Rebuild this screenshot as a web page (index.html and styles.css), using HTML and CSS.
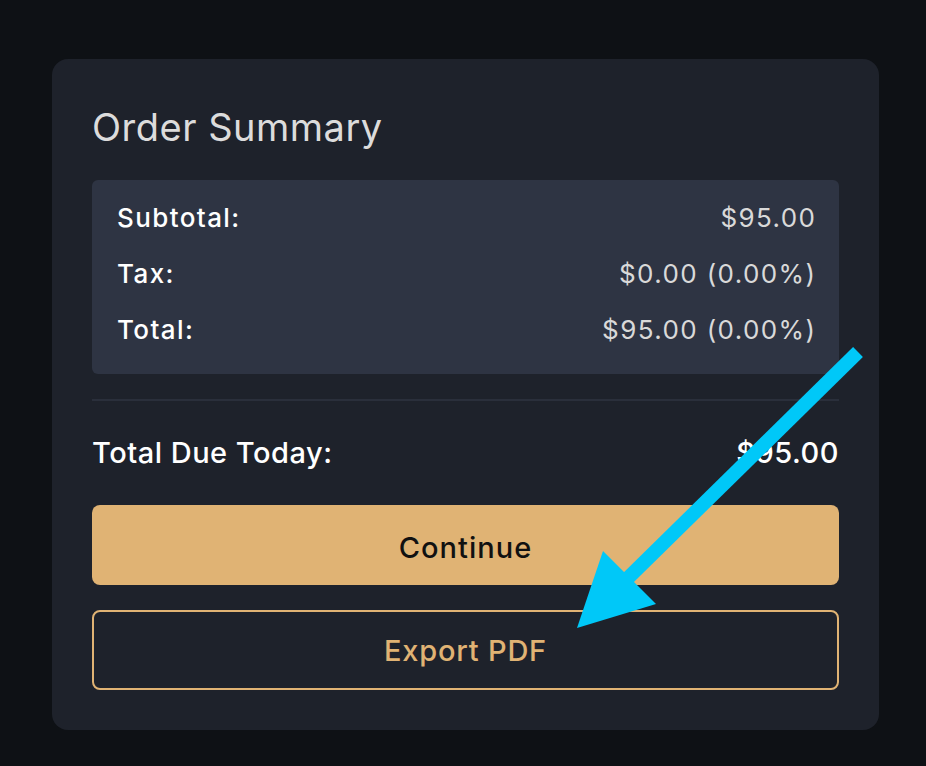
FILE: index.html
```html
<!DOCTYPE html>
<html lang="en">
<head>
<meta charset="utf-8">
<title>Order Summary</title>
<link rel="stylesheet" href="styles.css">
</head>
<body>
<main class="card">
  <h1 class="title">Order Summary</h1>
  <section class="summary">
    <div class="row"><span class="label">Subtotal:</span><span class="value">$95.00</span></div>
    <div class="row"><span class="label">Tax:</span><span class="value">$0.00 (0.00%)</span></div>
    <div class="row"><span class="label">Total:</span><span class="value">$95.00 (0.00%)</span></div>
  </section>
  <hr class="divider">
  <div class="due"><span>Total Due Today:</span><span>$95.00</span></div>
  <button class="btn btn-primary">Continue</button>
  <button class="btn btn-outline">Export PDF</button>
</main>
<svg class="arrow" width="926" height="766" viewBox="0 0 926 766">
  <line x1="858" y1="352" x2="628" y2="578" stroke="#00c8f8" stroke-width="14"/>
  <polygon points="577,628 603,551 656,604" fill="#00c8f8"/>
</svg>
</body>
</html>
```
FILE: styles.css
```css
html, body { margin: 0; }
body {
  background: #0e1115;
  padding: 59px 47px 38px 52px;
  font-family: Inter, "Noto Sans", sans-serif;
  position: relative;
}
.card {
  background: #1e222b;
  border-radius: 16px;
  padding: 40px;
  display: flex;
  flex-direction: column;
}
.title {
  margin: 0 0 25px;
  font-size: 38px;
  line-height: 56px;
  font-weight: 400;
  letter-spacing: 0.5px;
  color: #dcdcdc;
}
.summary {
  background: #2e3443;
  border-radius: 6px;
  padding: 20px 24px 26px 25px;
  display: flex;
  flex-direction: column;
  gap: 20px;
}
.row {
  display: flex;
  justify-content: space-between;
  font-size: 26px;
  line-height: 36px;
  letter-spacing: 1.4px;
}
.label { color: #ffffff; font-weight: 500; }
.value { color: #d9d9d9; margin-right: -1.4px; }
.divider {
  border: 0;
  height: 2px;
  background: #2a2f3b;
  margin: 25px 0 0;
}
.due {
  margin: 32px 0 32px;
  display: flex;
  justify-content: space-between;
  font-size: 29px;
  line-height: 40px;
  font-weight: 500;
  letter-spacing: 0.5px;
  color: #ffffff;
}
.btn {
  font-family: inherit;
  font-size: 29px;
  font-weight: 500;
  height: 80px;
  border-radius: 8px;
  cursor: pointer;
}
.btn-primary {
  background: #e0b374;
  color: #111111;
  border: 0;
  margin-bottom: 25px;
  letter-spacing: 1px;
  padding-top: 5px;
}
.btn-outline {
  background: transparent;
  color: #e0b374;
  border: 2px solid #e0b374;
  letter-spacing: 0.8px;
  padding-top: 2px;
}
.arrow {
  position: absolute;
  left: 0;
  top: 0;
  pointer-events: none;
}
```
